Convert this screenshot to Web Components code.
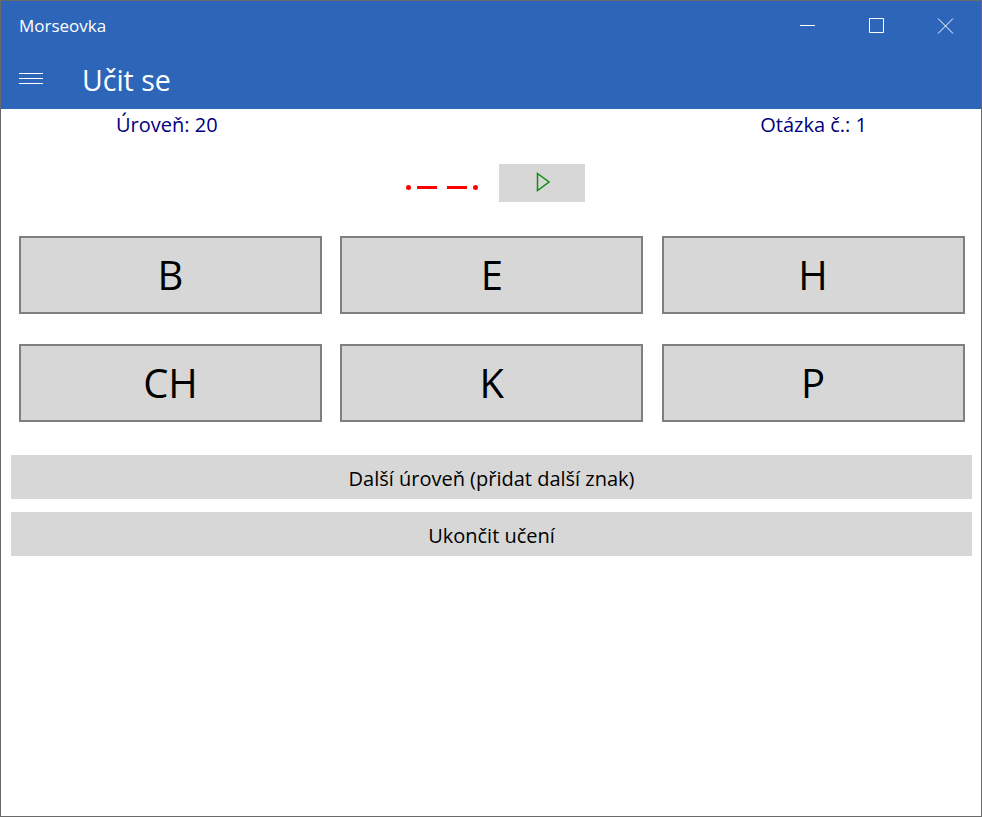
<!DOCTYPE html>
<html lang="cs">
<head>
<meta charset="utf-8">
<title>Morseovka</title>
<style>
    html, body { margin: 0; padding: 0; background: #fff; }
    body { font-family: "Open Sans", "Noto Sans", sans-serif; }
</style>
</head>
<body>
<app-window>
    <title-bar slot="top">Morseovka</title-bar>
    <page-header slot="top">Učit se</page-header>
    <status-row level="20" question="1"></status-row>
    <morse-row code=".--."></morse-row>
    <answer-grid>
        <answer-button>B</answer-button>
        <answer-button>E</answer-button>
        <answer-button>H</answer-button>
        <answer-button>CH</answer-button>
        <answer-button>K</answer-button>
        <answer-button>P</answer-button>
    </answer-grid>
    <wide-button>Další úroveň (přidat další znak)</wide-button>
    <wide-button>Ukončit učení</wide-button>
</app-window>

<script>
class AppWindow extends HTMLElement {
    connectedCallback() {
        const root = this.attachShadow({mode: 'open'});
        root.innerHTML = `
        <style>
            :host {
                display: block;
                box-sizing: border-box;
                width: 982px;
                height: 817px;
                border: 1px solid #696969;
                background: #fff;
                overflow: hidden;
            }
            .top { display: block; background: #2d66b8; height: 108px; }
        </style>
        <div class="top"><slot name="top"></slot></div>
        <slot></slot>`;
    }
}

class TitleBar extends HTMLElement {
    connectedCallback() {
        const root = this.attachShadow({mode: 'open'});
        root.innerHTML = `
        <style>
            :host {
                display: flex;
                align-items: center;
                height: 50px;
                padding-left: 18px;
                color: #fff;
                font-size: 17px;
            }
            .label { flex: 1; padding-bottom: 2px; }
            .controls { display: flex; margin-right: 13px; }
            svg { display: block; width: 46px; height: 50px; margin-left: 23px; }
            svg:first-child { margin-left: 0; }
        </style>
        <span class="label"><slot></slot></span>
        <div class="controls">
            <svg viewBox="0 0 46 50"><path d="M16 24.5h15" stroke="#fff" fill="none"/></svg>
            <svg viewBox="0 0 46 50"><path d="M16.5 17.5h14v14h-14z" stroke="#fff" fill="none"/></svg>
            <svg viewBox="0 0 46 50"><path d="M16 17.5l15 15M31 17.5l-15 15" stroke="#fff" fill="none"/></svg>
        </div>`;
    }
}

class PageHeader extends HTMLElement {
    connectedCallback() {
        const root = this.attachShadow({mode: 'open'});
        root.innerHTML = `
        <style>
            :host {
                display: flex;
                align-items: center;
                height: 58px;
                padding-left: 18px;
                color: #fff;
                font-size: 28.5px;
            }
            svg { display: block; width: 25px; height: 14px; margin-right: 38px; position: relative; top: -1px; }
        </style>
        <svg viewBox="0 0 25 14"><path d="M0 1.5h24M0 6.5h24M0 11.5h24" stroke="#fff" fill="none"/></svg>
        <span><slot></slot></span>`;
    }
}

class StatusRow extends HTMLElement {
    connectedCallback() {
        const root = this.attachShadow({mode: 'open'});
        root.innerHTML = `
        <style>
            :host {
                display: flex;
                justify-content: space-between;
                height: 32px;
                padding: 0 114px 0 115px;
                color: #000080;
                font-size: 20px;
                line-height: 31px;
            }
        </style>
        <span>Úroveň: ${this.getAttribute('level')}</span>
        <span>Otázka č.: ${this.getAttribute('question')}</span>`;
    }
}

class MorseRow extends HTMLElement {
    connectedCallback() {
        const root = this.attachShadow({mode: 'open'});
        const marks = [...this.getAttribute('code')]
            .map(c => `<i class="${c === '.' ? 'dot' : 'dash'}"></i>`)
            .join('');
        root.innerHTML = `
        <style>
            :host {
                display: flex;
                align-items: center;
                height: 38px;
                margin-top: 23px;
                padding-left: 405px;
            }
            .code { display: flex; align-items: center; gap: 6px; width: 93px; padding-top: 9px; height: 5px; }
            .dot { display: block; width: 5px; height: 5px; border-radius: 50%; background: #f00; }
            .dash { display: block; width: 20px; height: 3px; background: #f00; }
            .dash + .dash { margin-left: 4px; }
            .play {
                display: flex;
                align-items: center;
                justify-content: center;
                width: 86px;
                height: 38px;
                background: #d6d7d6;
            }
            svg { display: block; width: 16px; height: 20px; position: relative; top: -1px; left: 1px; }
        </style>
        <div class="code">${marks}</div>
        <div class="play">
            <svg viewBox="0 0 16 20"><path d="M2.5 1.5L14 10 2.5 18.5z" fill="none" stroke="#118a11" stroke-width="1.5"/></svg>
        </div>`;
    }
}

class AnswerGrid extends HTMLElement {
    connectedCallback() {
        const root = this.attachShadow({mode: 'open'});
        root.innerHTML = `
        <style>
            :host {
                display: grid;
                grid-template-columns: 303px 303px 303px;
                column-gap: 18.25px;
                row-gap: 30px;
                margin-top: 34px;
                padding-left: 18px;
                margin-bottom: 33px;
            }
        </style>
        <slot></slot>`;
    }
}

class AnswerButton extends HTMLElement {
    connectedCallback() {
        const root = this.attachShadow({mode: 'open'});
        root.innerHTML = `
        <style>
            :host {
                display: flex;
                align-items: center;
                justify-content: center;
                box-sizing: border-box;
                height: 78px;
                border: 2px solid #7f7f7f;
                background: #d6d7d6;
                color: #000;
                font-size: 40px;
            }
            span { position: relative; top: -1px; }
        </style>
        <span><slot></slot></span>`;
    }
}

class WideButton extends HTMLElement {
    connectedCallback() {
        const root = this.attachShadow({mode: 'open'});
        root.innerHTML = `
        <style>
            :host {
                display: flex;
                align-items: center;
                justify-content: center;
                width: 961px;
                height: 44px;
                margin: 0 0 13px 10px;
                background: #d6d7d6;
                color: #000;
                font-size: 20px;
                padding-top: 2px;
                box-sizing: border-box;
            }
        </style>
        <slot></slot>`;
    }
}

customElements.define('app-window', AppWindow);
customElements.define('title-bar', TitleBar);
customElements.define('page-header', PageHeader);
customElements.define('status-row', StatusRow);
customElements.define('morse-row', MorseRow);
customElements.define('answer-grid', AnswerGrid);
customElements.define('answer-button', AnswerButton);
customElements.define('wide-button', WideButton);
</script>
</body>
</html>
